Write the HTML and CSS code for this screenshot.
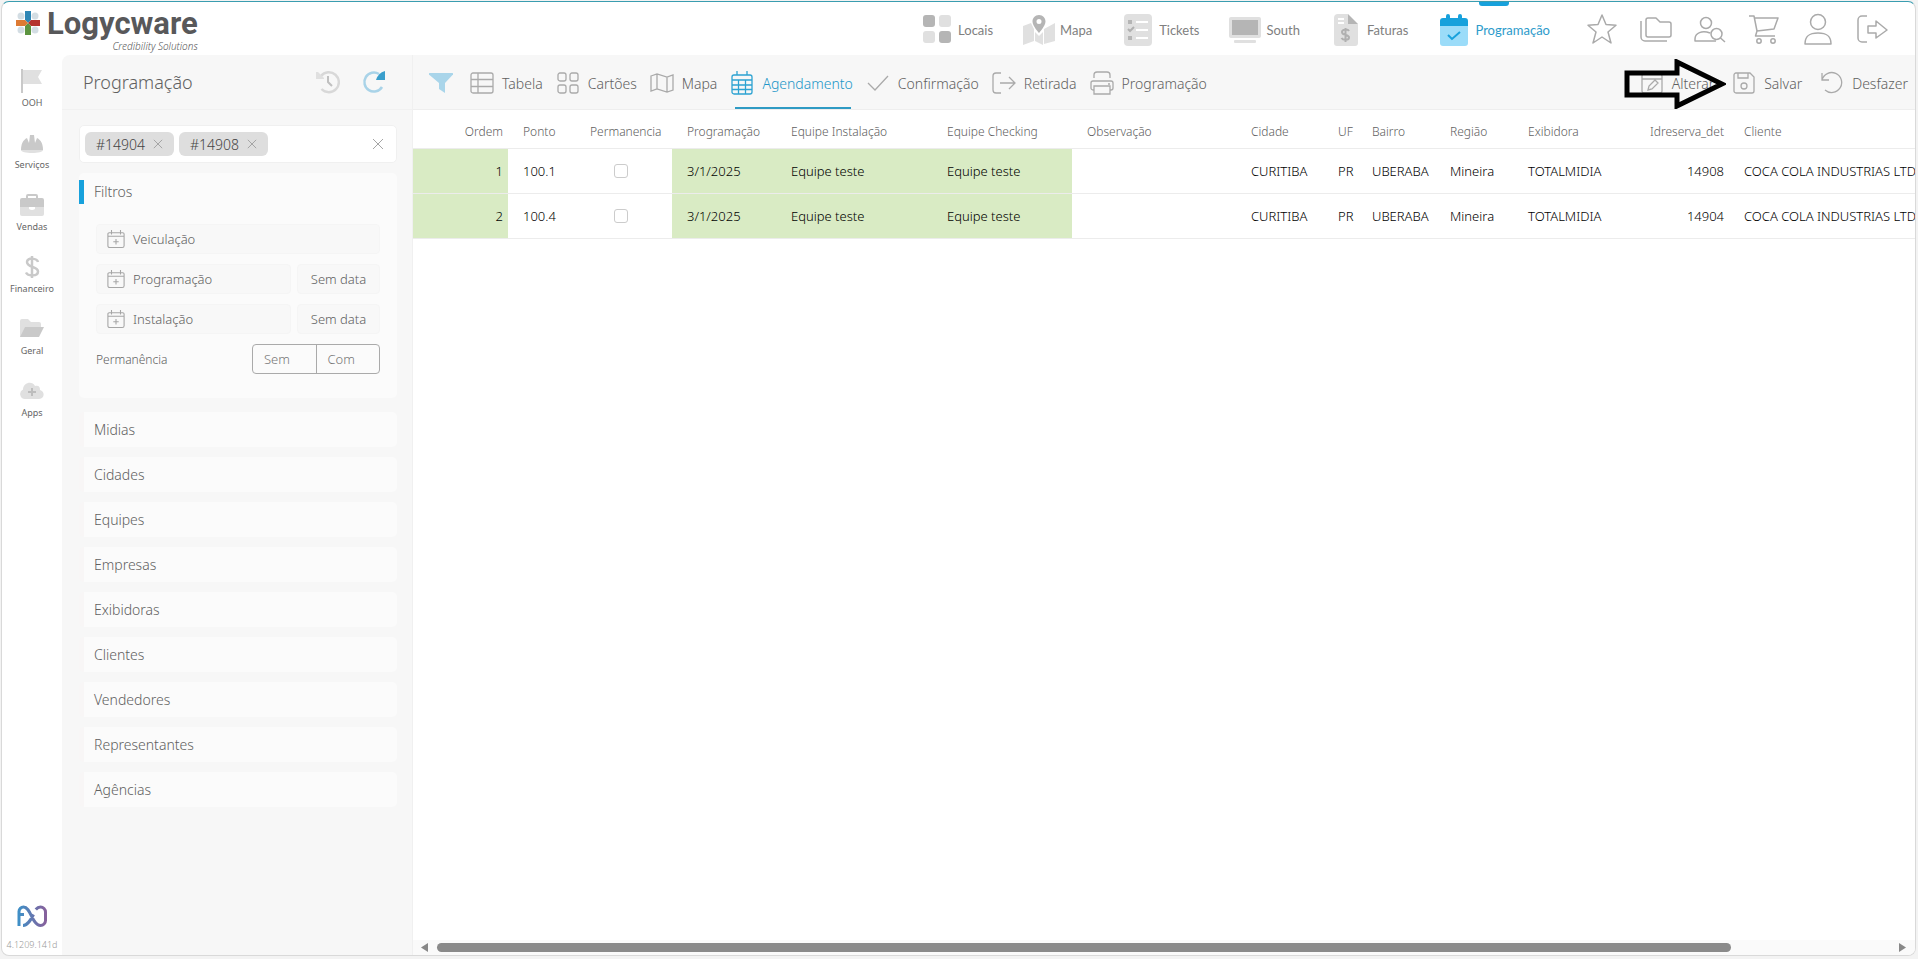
FILE: index.html
```html
<!DOCTYPE html>
<html lang="pt-BR">
<head>
<meta charset="utf-8">
<title>Logycware - Programação</title>
<link rel="stylesheet" href="styles.css">
</head>
<body>
<svg class="defs" aria-hidden="true">
  <defs>
    <linearGradient id="fx" x1="0" x2="1" y1="0" y2="0"><stop offset="0" stop-color="#3f8fc6"/><stop offset="1" stop-color="#86619c"/></linearGradient>
    <symbol id="calplus" viewBox="0 0 20 22"><path d="M5 1v5M15 1v5M2.500 4h15a1.500 1.500 0 0 1 1.500 1.500v13a2 2 0 0 1-2 2H3a2 2 0 0 1-2-2v-13A1.500 1.500 0 0 1 2.500 4zM1 8h18M10 11v6M7 14h6"/></symbol>
    <symbol id="x" viewBox="0 0 12 12"><path d="M1 1l10 10M11 1L1 11"/></symbol>
  </defs>
</svg>
<div class="window">
  <header class="topbar">
    <a class="brand" href="#">
      <svg class="brand-mark" viewBox="0 0 24 24"><g fill="#d3dde3"><circle cx="5" cy="5" r="3.500"/><circle cx="19" cy="5" r="3.500"/><circle cx="5" cy="19" r="3.500"/><circle cx="19" cy="19" r="3.500"/></g><path fill="#2e86b5" d="M9 0h6v9l-3 3-3-3z"/><path fill="#b5342f" d="M24 9v6h-9l-3-3 3-3z"/><path fill="#5c9440" d="M9 24h6v-9l-3-3-3 3z"/><path fill="#dd7a33" d="M0 9v6h9l3-3-3-3z"/></svg>
      <span class="brand-text"><span class="brand-name">Logycware</span><span class="brand-tag">Credibility Solutions</span></span>
    </a>
    <nav class="modules">
      <a href="#"><svg viewBox="0 0 32 32"><rect class="d" x="2" y="1" width="12" height="12" rx="3"/><rect class="l" x="18" y="1" width="12" height="12" rx="3"/><rect class="l" x="2" y="17" width="12" height="12" rx="3"/><rect class="d" x="18" y="17" width="12" height="12" rx="3"/></svg>Locais</a>
      <a href="#"><svg viewBox="0 0 32 32"><path class="l" d="M0 12l8-3 3 6v12l-11 4zM12 18l4 4 4-4v13l-8-4zM21 15l11-6v18l-11 3z"/><path class="d" fill-rule="evenodd" d="M16 1c4 0 6.500 3 6.500 6.500C22.500 12 16 19 16 19S9.500 12 9.500 7.500C9.500 4 12 1 16 1zm0 4a2.500 2.500 0 1 0 0 5 2.500 2.500 0 0 0 0-5z"/></svg>Mapa</a>
      <a href="#"><svg viewBox="0 0 32 32"><rect class="l" x="2" y="0" width="28" height="32" rx="4"/><path class="d" d="M6 6h4v4H6zM6 22h4v4H6z"/><path d="M6 15l2 2 4-4" fill="none" stroke="#b0b0b0" stroke-width="2"/><path d="M14 8h12M14 16h12M14 24h12" stroke="#fff" stroke-width="2"/></svg>Tickets</a>
      <a href="#"><svg viewBox="0 0 32 32"><rect class="l" x="0" y="3" width="32" height="21" rx="2"/><rect class="d" x="3" y="6" width="26" height="15"/><rect class="l" x="5" y="26" width="22" height="3" rx="1"/></svg>South</a>
      <a href="#"><svg viewBox="0 0 32 32"><path class="l" d="M8 0h10v10h10v19a3 3 0 0 1-3 3H7a3 3 0 0 1-3-3V4a4 4 0 0 1 4-4z"/><path class="d" d="M18 0l10 10H18z"/><path d="M8 5h6M8 9h6" stroke="#fff" stroke-width="2"/><path d="M19 17c-1-2-7-2-7 1 0 4 7 2 7 5.500 0 3-6 3-7.500.500M15.500 14v14" fill="none" stroke="#b0b0b0" stroke-width="2"/></svg>Faturas</a>
      <a href="#" class="active"><svg viewBox="0 0 32 32"><path fill="#9bdcf9" d="M2 12h28v17a3 3 0 0 1-3 3H5a3 3 0 0 1-3-3z"/><path fill="#17a1dc" d="M2 12V7a3 3 0 0 1 3-3h3V2a2 2 0 0 1 4 0v2h8V2a2 2 0 0 1 4 0v2h3a3 3 0 0 1 3 3v5z"/><path d="M10 21l4 4 8-7" fill="none" stroke="#17a1dc" stroke-width="2"/></svg>Programação</a>
    </nav>
    <div class="tools">
      <button aria-label="Favoritos"><svg viewBox="0 0 32 32"><path d="M16 2l4 9.500 10 .800-8 6.700 3 11-9-6-9 6 3-11-8-6.700 10-.800z"/></svg></button>
      <button aria-label="Pastas"><svg viewBox="0 0 32 32"><path d="M6 7a2 2 0 0 1 2-2h8l4 4h9a2 2 0 0 1 2 2v11a2 2 0 0 1-2 2H8a2 2 0 0 1-2-2zM1 8v16a4 4 0 0 0 4 4h22"/></svg></button>
      <button aria-label="Buscar pessoa"><svg viewBox="0 0 32 32"><circle cx="12" cy="10" r="5.500"/><path d="M16 20c-8-3-15 0-15 6v2h21M26.500 25L31 29"/><circle cx="22.500" cy="21" r="5.500"/></svg></button>
      <button aria-label="Carrinho"><svg viewBox="0 0 32 32"><path d="M1 3h5l3 15 17-2 4-11H7M9 18l-1.500 5H27"/><circle cx="11" cy="28" r="2.200"/><circle cx="25" cy="28" r="2.200"/></svg></button>
      <button aria-label="Conta"><svg viewBox="0 0 32 32"><circle cx="16" cy="9" r="7.500"/><path d="M3 31c0-8 4-11 13-11s13 3 13 11z"/></svg></button>
      <button aria-label="Sair"><svg viewBox="0 0 32 32"><path d="M11 3H6a4 4 0 0 0-4 4v18a4 4 0 0 0 4 4h5M12 13h8V8l11 9-11 8v-5h-8z"/></svg></button>
    </div>
  </header>
  <div class="body">
    <nav class="rail">
      <a href="#"><svg viewBox="0 0 24 24"><path class="l" d="M3 1h19l-4 7 4 7H3z"/><path class="d" d="M1 0h2v24H1z"/></svg>OOH</a>
      <a href="#"><svg viewBox="0 0 24 24"><path class="d" d="M1 19c0-6 2-10 6-12l2 5 1-8h4l1 8 2-5c4 2 6 6 6 12z"/><path class="l" d="M1 19h22c0 2-5 3-11 3S1 21 1 19z"/></svg>Serviços</a>
      <a href="#"><svg viewBox="0 0 24 24"><path class="l" d="M0 14h24v7a2 2 0 0 1-2 2H2a2 2 0 0 1-2-2z"/><path class="d" fill-rule="evenodd" d="M0 14V7a2 2 0 0 1 2-2h4V3a2 2 0 0 1 2-2h8a2 2 0 0 1 2 2v2h4a2 2 0 0 1 2 2v7zM8 5h8V3H8z"/><path fill="#fff" d="M9 14h6v2q-3 2-6 0z"/></svg>Vendas</a>
      <a href="#"><svg viewBox="0 0 24 24"><path d="M18 7c-1-4-11-5-11 0 0 6 11 4 11 9.500 0 5-10 5-12 1M12 1v22" fill="none" stroke="#c9c9c9" stroke-width="2.500"/></svg>Financeiro</a>
      <a href="#"><svg viewBox="0 0 24 24"><path class="l" d="M0 20V4a2 2 0 0 1 2-2h6l3 3h8a2 2 0 0 1 2 2v4z"/><path class="d" d="M5 10h19l-5 10H0z"/></svg>Geral</a>
      <a href="#"><svg viewBox="0 0 24 24"><path class="l" d="M5 20a5 5 0 0 1-2-9.500C3 4 12 1 15 7c4-1 5 1 5 4 5 1 5 9-1 9z"/><path d="M12 9v8M8 13h8" stroke="#bdbdbd" stroke-width="2"/></svg>Apps</a>
      <div class="rail-foot">
        <svg viewBox="0 0 31 22"><path d="M2 21V6.500a4.500 4.500 0 0 1 4.500-4.500C14 2 15 20.500 23.500 20.500a5 5 0 0 0 5-5V7a5 5 0 0 0-5-5C21.500 2 20 3 18.800 4.500M2 9.500h5M6 20.500c5 0 8-6 10.500-11" fill="none" stroke="url(#fx)" stroke-width="3"/></svg>
        <span>4.1209.141d</span>
      </div>
    </nav>
    <aside class="filters">
      <div class="filters-head">
        <h1>Programação</h1>
        <button aria-label="Histórico"><svg viewBox="0 0 24 24"><path d="M5 6a10 10 0 1 1 .500 13" fill="none" stroke="#d8d8d8" stroke-width="2.500"/><path class="l" d="M0 2h2l6 6v1H0z"/><path d="M12 6v6l4 4" fill="none" stroke="#c0c0c0" stroke-width="2"/></svg></button>
        <button aria-label="Atualizar"><svg viewBox="0 0 24 24"><path d="M17 4a9.500 9.500 0 1 0 3 13" fill="none" stroke="#a9d3e8" stroke-width="2.500"/><path fill="#3a9fcc" d="M23 1v9h-9q2-7 9-9z"/></svg></button>
      </div>
      <div class="filters-body">
        <div class="search">
          <span class="chip">#14904<button aria-label="Remover #14904"><svg><use href="#x"/></svg></button></span>
          <span class="chip">#14908<button aria-label="Remover #14908"><svg><use href="#x"/></svg></button></span>
          <input type="text" aria-label="Pesquisar">
          <button class="clear" aria-label="Limpar"><svg><use href="#x"/></svg></button>
        </div>
        <section class="panel">
          <h2>Filtros</h2>
          <div class="dates">
            <div class="date-row"><button class="pick"><svg><use href="#calplus"/></svg>Veiculação</button></div>
            <div class="date-row"><button class="pick"><svg><use href="#calplus"/></svg>Programação</button><button class="nodate">Sem data</button></div>
            <div class="date-row"><button class="pick"><svg><use href="#calplus"/></svg>Instalação</button><button class="nodate">Sem data</button></div>
            <div class="stay"><span>Permanência</span><div class="toggle"><button>Sem</button><button>Com</button></div></div>
          </div>
        </section>
        <button class="group">Midias</button>
        <button class="group">Cidades</button>
        <button class="group">Equipes</button>
        <button class="group">Empresas</button>
        <button class="group">Exibidoras</button>
        <button class="group">Clientes</button>
        <button class="group">Vendedores</button>
        <button class="group">Representantes</button>
        <button class="group">Agências</button>
      </div>
    </aside>
    <main class="main">
      <div class="toolbar">
        <button class="funnel" aria-label="Filtrar"><svg viewBox="0 0 24 24"><path fill="#a9d5ea" d="M1 2h22a1 1 0 0 1 .500 2L16 12v10l-6-4v-6L.500 4A1 1 0 0 1 1 2z"/></svg></button>
        <button><svg viewBox="0 0 24 24"><path d="M3 2h18a2 2 0 0 1 2 2v16a2 2 0 0 1-2 2H3a2 2 0 0 1-2-2V4a2 2 0 0 1 2-2zM1 8.500h22M1 15.500h22M8 2v20"/></svg>Tabela</button>
        <button><svg viewBox="0 0 24 24"><rect x="2" y="2" width="8" height="8" rx="2"/><rect x="14" y="2" width="8" height="8" rx="2"/><rect x="2" y="14" width="8" height="8" rx="2"/><rect x="14" y="14" width="8" height="8" rx="2"/></svg>Cartões</button>
        <button><svg viewBox="0 0 24 24"><path d="M1 5l6-2 10 3 6-2v15l-6 2-10-3-6 2zM7 3v15M17 6v15"/></svg>Mapa</button>
        <button class="active"><svg viewBox="0 0 24 24"><path d="M4 4h16a2 2 0 0 1 2 2v15a2 2 0 0 1-2 2H4a2 2 0 0 1-2-2V6a2 2 0 0 1 2-2zM2 9h20M2 14h20M2 18.500h20M8.500 9v14M15.500 9v14M7 0v4M17 0v4"/></svg>Agendamento</button>
        <button><svg viewBox="0 0 24 24"><path d="M2 12l7 7L22 5"/></svg>Confirmação</button>
        <button><svg viewBox="0 0 24 24"><path d="M9 2H4a3 3 0 0 0-3 3v14a3 3 0 0 0 3 3h5M8 12h15M17 6l6 6-6 6"/></svg>Retirada</button>
        <button><svg viewBox="0 0 24 24"><path d="M4 7V4a3 3 0 0 1 3-3h10a3 3 0 0 1 3 3v3M4 19H3a2 2 0 0 1-2-2v-5a2 2 0 0 1 2-2h18a2 2 0 0 1 2 2v5a2 2 0 0 1-2 2h-1M4 15h16v8H4zM18 13h2"/></svg>Programação</button>
        <div class="edit">
          <button><svg viewBox="0 0 24 24"><path d="M4 3h16a2 2 0 0 1 2 2v15a2 2 0 0 1-2 2H4a2 2 0 0 1-2-2V5a2 2 0 0 1 2-2zM2 8h20M8 19l1-4 6-6 3 3-6 6zM7 0v3M17 0v3"/></svg>Alterar</button>
          <button><svg viewBox="0 0 24 24"><path d="M4 2h14l4 4v14a2 2 0 0 1-2 2H4a2 2 0 0 1-2-2V4a2 2 0 0 1 2-2zM6 2v5h10V2"/><circle cx="12" cy="15" r="3"/></svg>Salvar</button>
          <button><svg viewBox="0 0 24 24"><path d="M2 2v7h7M2 9a10 10 0 1 1 3 10"/></svg>Desfazer</button>
        </div>
        <svg class="pointer" viewBox="0 0 102 50"><path d="M3 14h50V3l45 22-45 22V36H3z"/></svg>
      </div>
      <div class="grid">
        <table>
          <colgroup><col class="w95"><col class="w67"><col class="w97"><col class="w104"><col class="w156"><col class="w140"><col class="w164"><col class="w87"><col class="w34"><col class="w78"><col class="w78"><col class="w107"><col class="w109"><col class="w300"></colgroup>
          <thead><tr><th class="num">Ordem</th><th>Ponto</th><th>Permanencia</th><th>Programação</th><th>Equipe Instalação</th><th>Equipe Checking</th><th>Observação</th><th>Cidade</th><th>UF</th><th>Bairro</th><th>Região</th><th>Exibidora</th><th class="num">Idreserva_det</th><th>Cliente</th></tr></thead>
          <tbody>
            <tr><td class="num on">1</td><td>100.1</td><td class="check"><input type="checkbox" aria-label="Permanencia 100.1"></td><td class="on">3/1/2025</td><td class="on">Equipe teste</td><td class="on">Equipe teste</td><td></td><td>CURITIBA</td><td>PR</td><td>UBERABA</td><td>Mineira</td><td>TOTALMIDIA</td><td class="num">14908</td><td>COCA COLA INDUSTRIAS LTDA</td></tr>
            <tr><td class="num on">2</td><td>100.4</td><td class="check"><input type="checkbox" aria-label="Permanencia 100.4"></td><td class="on">3/1/2025</td><td class="on">Equipe teste</td><td class="on">Equipe teste</td><td></td><td>CURITIBA</td><td>PR</td><td>UBERABA</td><td>Mineira</td><td>TOTALMIDIA</td><td class="num">14904</td><td>COCA COLA INDUSTRIAS LTDA</td></tr>
          </tbody>
        </table>
      </div>
      <div class="scroll">
        <svg viewBox="0 0 8 9"><path d="M7 0v9L0 4.500z"/></svg>
        <div class="track"><div class="thumb"></div></div>
        <svg viewBox="0 0 8 9"><path d="M0 0v9l7-4.500z"/></svg>
      </div>
    </main>
  </div>
</div>
</body>
</html>
```
FILE: styles.css
```css
* { box-sizing: border-box; }
body {
  margin: 0;
  height: 100vh;
  padding: 1px 2px 3px 1px;
  background: #f3f3f3;
  font-family: "Noto Sans", "Open Sans", sans-serif;
  font-weight: 300;
  color: #606060;
}
.defs { position: absolute; width: 0; height: 0; }
button { font: inherit; color: inherit; border: 0; background: none; padding: 0; }
a { color: inherit; text-decoration: none; }
h1, h2 { margin: 0; font-weight: 300; }
svg { display: block; flex: none; }
.d { fill: #b5b5b5; }
.l { fill: #e0e0e0; }

.window {
  height: 100%;
  display: flex;
  flex-direction: column;
  background: #fff;
  border: 1px solid #d9d9d9;
  border-top-color: #3a9db0;
  border-radius: 8px;
  overflow: hidden;
}
.topbar { display: flex; align-items: center; height: 53px; flex: none; padding: 0 27px 0 14px; }
.brand { display: flex; gap: 7px; color: #58585a; margin-right: auto; }
.brand-mark { width: 24px; height: 24px; margin-top: 4px; }
.brand-text { display: flex; flex-direction: column; }
.brand-name { font-family: Roboto, sans-serif; font-weight: 700; font-size: 31px; line-height: 34px; }
.brand-tag { font-style: italic; font-size: 10px; line-height: 10px; text-align: right; }

.modules { display: flex; gap: 30px; height: 100%; font: 400 13px Lato, sans-serif; color: #808080; }
.modules a { display: flex; align-items: center; gap: 5px; padding-top: 2px; position: relative; }
.modules svg { width: 32px; height: 32px; }
.modules .active { color: #2d9bcb; }
.modules .active::before { content: ""; position: absolute; top: 0; left: calc(50% - 15px); width: 30px; height: 4px; background: #17a1dc; border-radius: 0 0 3px 3px; }
.tools { display: flex; gap: 22px; margin-left: 36px; }
.tools svg { width: 32px; height: 32px; fill: none; stroke: #aaa; stroke-width: 1.5; stroke-linejoin: round; }

.body { flex: 1; display: flex; min-height: 0; }
.rail { width: 60px; flex: none; display: flex; flex-direction: column; padding-top: 14px; font-size: 9px; line-height: 14px; color: #666; font-weight: 400; }
.rail a { height: 62px; display: flex; flex-direction: column; align-items: center; gap: 3px; }
.rail a svg { width: 24px; height: 24px; }
.rail .d { fill: #c9c9c9; }
.rail-foot { margin-top: auto; padding-bottom: 3px; display: flex; flex-direction: column; align-items: center; gap: 11px; color: #999; font-weight: 300; }
.rail-foot svg { width: 31px; height: 22px; }

.filters { width: 351px; flex: none; background: #f7f7f7; border-right: 1px solid #f0f0f0; border-radius: 8px 0 0 0; }
.filters-head { height: 55px; display: flex; align-items: center; gap: 22px; padding: 0 26px 0 21px; border-bottom: 1px solid #f1f1f1; }
.filters-head h1 { font-size: 18px; margin-right: auto; }
.filters-head svg { width: 24px; height: 24px; }
.filters-body { padding: 15px 15px 0 17px; display: flex; flex-direction: column; gap: 10px; }
.search { height: 38px; display: flex; align-items: center; gap: 5px; padding: 0 12px 0 5px; background: #fff; border: 1px solid #f0f0f0; border-radius: 5px; }
.chip { height: 24px; width: 89px; flex: none; display: flex; align-items: center; justify-content: space-between; padding: 0 11px; background: #dedede; border-radius: 6px; font-size: 14px; color: #444; }
.chip svg { width: 10px; height: 10px; stroke: #999; }
.search input { flex: 1; min-width: 0; border: 0; outline: 0; background: none; font: inherit; }
.clear svg { width: 12px; height: 12px; stroke: #a5a5a5; }
.panel { background: #fbfbfb; border-radius: 5px; padding: 7px 17px 24px 0; margin-bottom: 4px; }
.panel h2 { font-size: 14px; line-height: 24px; padding-left: 10px; border-left: 5px solid #17a1dc; border-radius: 0 4px 4px 0; }
.dates { padding: 20px 0 0 17px; display: flex; flex-direction: column; gap: 10px; font-size: 13px; }
.date-row { display: flex; gap: 6px; }
.date-row button { height: 30px; background: #f8f8f8; border: 1px solid #f5f5f5; border-radius: 4px; }
.pick { flex: 1; display: flex; align-items: center; gap: 8px; padding-left: 10px; }
.pick svg { width: 18px; height: 20px; fill: none; stroke: #a5a5a5; stroke-width: 1.2; }
.date-row .nodate { width: 83px; }
.stay { display: flex; justify-content: space-between; align-items: center; font-size: 12px; }
.toggle { display: flex; width: 128px; height: 30px; border: 1px solid #aaa; border-radius: 4px; font-size: 13px; color: #777; }
.toggle button { flex: 1; text-align: left; padding-left: 11px; }
.toggle button + button { border-left: 1px solid #aaa; }
.group { height: 35px; text-align: left; padding-left: 10px; background: #fbfbfb; border-left: 5px solid #f8f6f6; border-radius: 5px; font-size: 14px; }

.main { flex: 1; min-width: 0; display: flex; flex-direction: column; }
.toolbar { height: 55px; flex: none; display: flex; align-items: center; gap: 13px; padding: 0 7px 0 16px; background: #f7f7f7; border-bottom: 1px solid #eee; position: relative; font-size: 14px; }
.toolbar button { display: flex; align-items: center; gap: 8px; height: 54px; padding-top: 2px; position: relative; }
.toolbar button svg { width: 24px; height: 24px; fill: none; stroke: #aaa; stroke-width: 1.3; }
.toolbar .funnel { margin-right: 4px; }
.toolbar .funnel svg { stroke: none; }
.toolbar .active { color: #2096c8; }
.toolbar .active svg { stroke: #2da3d2; }
.toolbar .active::after { content: ""; position: absolute; left: 5px; right: 2px; bottom: 0; height: 2px; background: #2f9bc4; }
.edit { margin-left: auto; display: flex; gap: 18px; }
.pointer { position: absolute; right: 189px; top: 4px; width: 102px; height: 50px; fill: none; stroke: #000; stroke-width: 5; }

.grid { flex: 1; overflow: hidden; }
table { table-layout: fixed; width: 1616px; border-collapse: collapse; }
th, td { padding: 0 0 0 15px; text-align: left; white-space: nowrap; border-bottom: 1px solid #ececec; }
th { height: 38px; padding-top: 6px; font-size: 12px; font-weight: 300; }
td { height: 45px; font-size: 13px; font-weight: 300; color: #000; }
th.num, td.num { text-align: right; padding-left: 0; padding-right: 5px; }
.on { background: #d9ebc4; }
td.check { padding: 0 6px 0 0; }
.check input { appearance: none; display: block; width: 14px; height: 14px; margin: 0 auto; border: 1px solid #ccc; border-radius: 3px; background: #fff; }
.w95 { width: 95px; } .w67 { width: 67px; } .w97 { width: 97px; } .w104 { width: 104px; }
.w156 { width: 156px; } .w140 { width: 140px; } .w164 { width: 164px; } .w87 { width: 87px; }
.w34 { width: 34px; } .w78 { width: 78px; } .w107 { width: 107px; } .w109 { width: 109px; } .w300 { width: 300px; }

.scroll { height: 15px; flex: none; display: flex; align-items: center; gap: 8px; padding: 0 8px; background: #fafafa; }
.scroll svg { width: 8px; height: 9px; fill: #888; }
.track { flex: 1; }
.thumb { width: 89%; height: 9px; border-radius: 5px; background: #8a8a8a; }
```
